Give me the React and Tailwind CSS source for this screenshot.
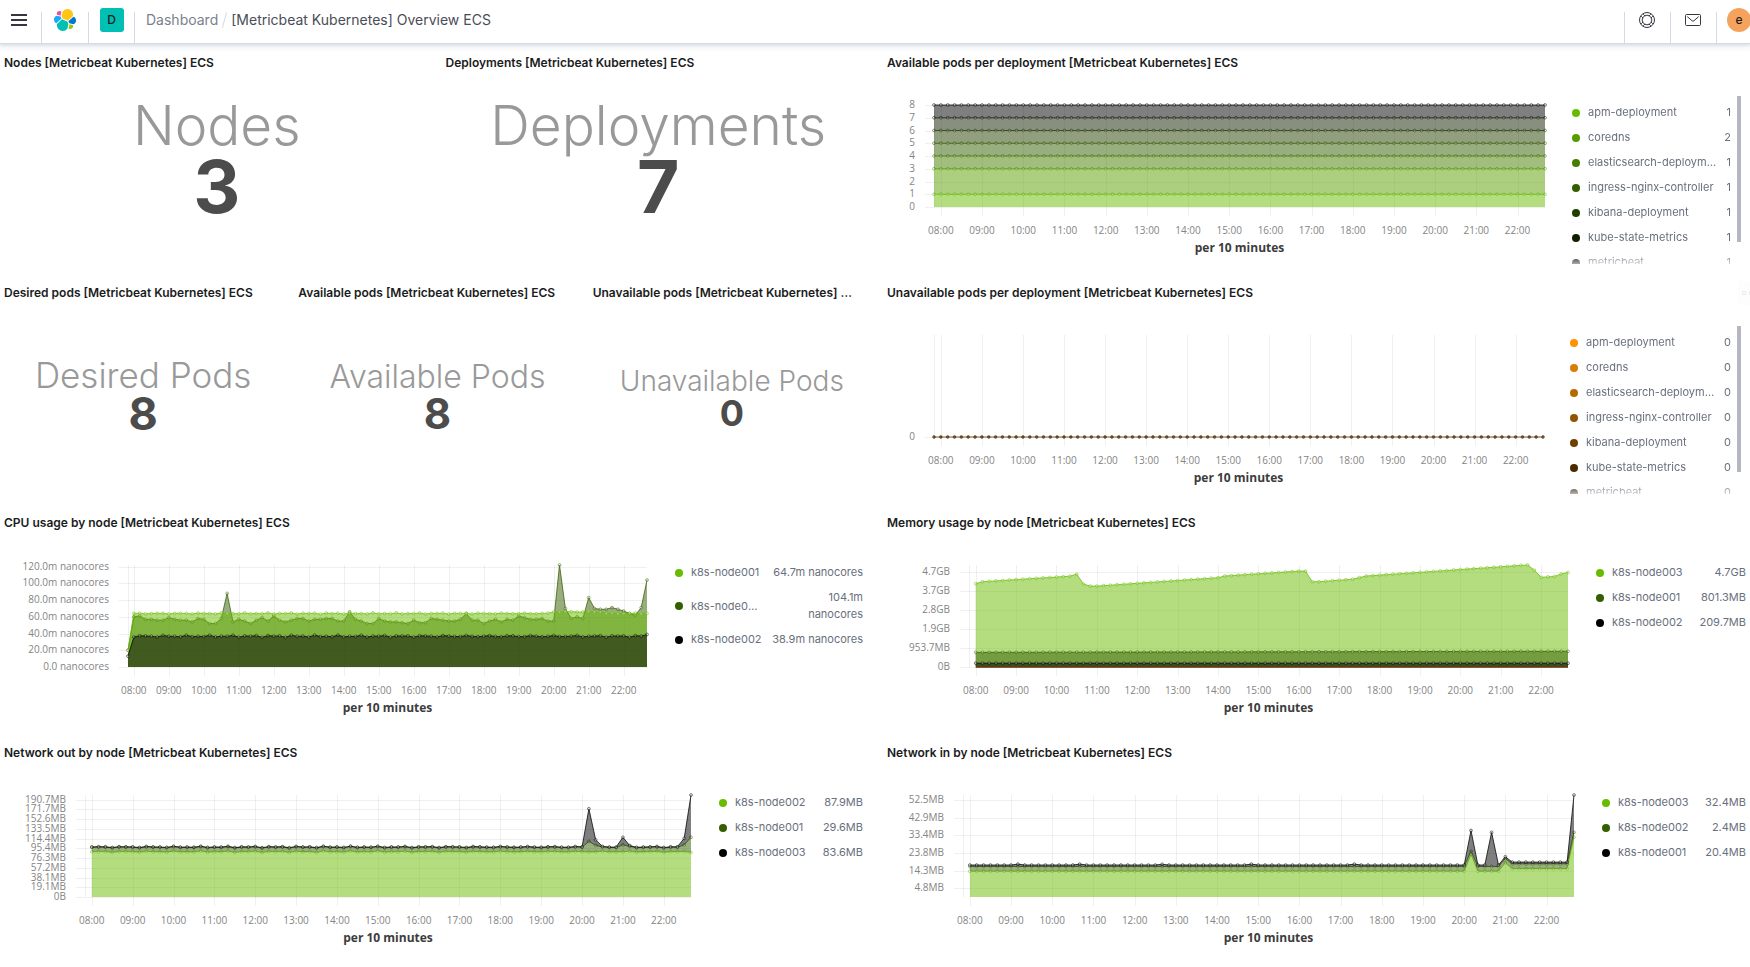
import { useLayoutEffect, useRef, useState } from "react";

const POINTS = 90;
const PLOT_TOP = 30;
const PLOT_BOTTOM = 132;
const HOURS = Array.from({ length: 15 }, (_, i) => `${String(i + 8).padStart(2, "0")}:00`);

const indices = Array.from({ length: POINTS }, (_, i) => i);
const flat = (value) => indices.map(() => value);

// Repeatable small variation around a base value.
const wobble = (base, amount, seed) =>
  indices.map((i) => base + amount * Math.sin(i * 2.4 + seed) * Math.cos(i * 0.7 + seed * 2));

const withPoints = (series, points) => series.map((v, i) => (i in points ? points[i] : v));

// Linear interpolation between [index, value] stops.
const through = (stops) =>
  indices.map((i) => {
    if (i < stops[0][0]) return null;
    const next = stops.findIndex(([x]) => x >= i);
    const [x1, y1] = stops[next];
    if (x1 === i) return y1;
    const [x0, y0] = stops[next - 1];
    return y0 + ((y1 - y0) * (i - x0)) / (x1 - x0);
  });

const GREENS = ["#68bc00", "#579d00", "#457d00", "#345e00", "#233f00", "#111f00", "#000000"];
const ORANGES = ["#fe9200", "#d97d00", "#b66900", "#925400", "#6f4000", "#4b2b00", "#281700"];
const DEPLOYMENTS = [
  "apm-deployment",
  "coredns",
  "elasticsearch-deployment",
  "ingress-nginx-controller",
  "kibana-deployment",
  "kube-state-metrics",
  "metricbeat",
];

const podLevels = [0, 1, 3, 4, 5, 6, 7, 8];
const availableSeries = DEPLOYMENTS.map((_, i) => ({
  color: GREENS[i],
  values: flat(podLevels[i + 1]),
  base: flat(podLevels[i]),
}));

const cpuNode3 = [
  20, 60, 61, 57, 57, 56, 56, 59, 57, 56, 56, 54, 58, 57, 52, 52, 58, 88, 54, 57, 55, 52, 56, 59, 55, 61, 56, 54, 56,
  58, 58, 55, 57, 57, 58, 58, 55, 55, 66, 57, 55, 52, 52, 58, 55, 54, 54, 53, 52, 56, 53, 53, 58, 57, 56, 55, 55, 57,
  64, 56, 56, 52, 55, 57, 54, 57, 56, 61, 59, 57, 57, 58, 55, 55, 122, 70, 58, 60, 58, 83, 70, 69, 69, 71, 69, 67, 64,
  62, 71, 104,
];
const cpuNode1 = wobble(64, 0.8, 1).map((v, i) => (i === 0 ? 20 : i > 72 && i < 82 ? v + 2 : v));
const cpuNode2 = wobble(36.8, 1.4, 3).map((v, i) => (i === 0 ? 13 : i === 89 ? 38.9 : v));

const skipFirst = (series) => series.map((v, i) => (i === 0 ? null : v));

const memory3 = through([
  [1, 4.39], [2, 4.49], [15, 4.78], [16, 4.89], [17, 4.37], [18, 4.26], [19, 4.26], [37, 4.7], [38, 4.79],
  [49, 5.05], [50, 5.05], [51, 4.49], [52, 4.49], [57, 4.62], [59, 4.79], [82, 5.35], [83, 5.37], [84, 5.1],
  [85, 4.72], [87, 4.77], [88, 4.9], [89, 4.98],
]);
const memory1 = through([[1, 0.77], [89, 0.83]]);
const memory2 = through([[1, 0.2], [89, 0.2]]);

const outLow = skipFirst(wobble(88.6, 1.5, 2));
const outMid = withPoints(skipFirst(wobble(97.3, 1.5, 2)), { 74: 109, 75: 101, 79: 102, 80: 99, 88: 102, 89: 117 });
const outTop = withPoints(skipFirst(wobble(98.2, 1.5, 2)), { 74: 173, 75: 112, 79: 117, 80: 101, 88: 115, 89: 200 });

const inStep = (a, b) => indices.map((i) => (i === 0 ? null : i > 79 ? b : a));
const inLow = withPoints(inStep(13.9, 15.3), { 74: 23, 79: 18.5, 89: 32.4 });
const inMid = withPoints(inStep(16.5, 17.9), { 74: 24.8, 79: 20.8, 89: 35 });
const inTop = withPoints(inStep(17.3, 18.9), { 8: 17.8, 17: 17.8, 29: 17.7, 42: 17.8, 57: 17.8, 74: 36, 77: 35, 79: 21.8, 89: 55.2 });

function useWidth() {
  const ref = useRef(null);
  const [width, setWidth] = useState(0);
  useLayoutEffect(() => {
    const measure = () => setWidth(ref.current.clientWidth);
    measure();
    const observer = new ResizeObserver(measure);
    observer.observe(ref.current);
    return () => observer.disconnect();
  }, []);
  return [ref, width];
}

function Chart({ label, left, max, ticks, series, baseline }) {
  const [ref, width] = useWidth();
  const right = width - 16;
  const x = (i) => left + (i * (right - left)) / (POINTS - 1);
  const y = (v) => PLOT_BOTTOM - (v / max) * (PLOT_BOTTOM - PLOT_TOP);
  return (
    <div ref={ref} className="min-w-0 flex-1">
      {width > 0 && (
        <svg width={width} height={190} role="img" aria-label={label} className="block font-['Open_Sans',sans-serif]">
          <g stroke="#000" strokeOpacity="0.06">
            {ticks.map(([v, text]) => (
              <line key={text} x1={left - 9} x2={right} y1={Math.round(y(v)) + 0.5} y2={Math.round(y(v)) + 0.5} />
            ))}
            <line x1={Math.round(left) + 0.5} x2={Math.round(left) + 0.5} y1={PLOT_TOP} y2={PLOT_BOTTOM} />
            {HOURS.map((h, i) => (
              <line key={h} x1={Math.round(x(1 + i * 6)) + 0.5} x2={Math.round(x(1 + i * 6)) + 0.5} y1={PLOT_TOP} y2={141} />
            ))}
          </g>
          {series.map(({ color, values, base, line }) => {
            const pts = indices.filter((i) => values[i] !== null);
            const top = pts.map((i) => `${x(i).toFixed(1)},${y(values[i]).toFixed(1)}`);
            const bottom = [...pts].reverse().map((i) => `${x(i).toFixed(1)},${y(base ? base[i] : 0).toFixed(1)}`);
            return (
              <g key={color}>
                {!line && <polygon points={[...top, ...bottom].join(" ")} fill={color} fillOpacity="0.5" />}
                <polyline points={top.join(" ")} fill="none" stroke={color} strokeOpacity="0.75" />
                {pts.map((i) => (
                  <circle
                    key={i}
                    cx={x(i)}
                    cy={y(values[i])}
                    r="1.4"
                    fill={line ? color : "#fff"}
                    fillOpacity={line ? 0.7 : 0.3}
                    stroke={color}
                    strokeOpacity="0.5"
                  />
                ))}
              </g>
            );
          })}
          {baseline && <line x1={x(1)} x2={right} y1={PLOT_BOTTOM + 0.5} y2={PLOT_BOTTOM + 0.5} stroke={baseline} />}
          <g fill="#848484" fontSize="10">
            {ticks.map(([v, text]) => (
              <text key={text} x={left - 19} y={y(v) + 3} textAnchor="end">{text}</text>
            ))}
            {HOURS.map((h, i) => (
              <text key={h} x={x(1 + i * 6)} y={159} textAnchor="middle">{h}</text>
            ))}
          </g>
          <text x={(left + right) / 2} y={177} textAnchor="middle" fontSize="12" fontWeight="700" fill="#3c3c3c">
            per 10 minutes
          </text>
        </svg>
      )}
    </div>
  );
}

function Legend({ items, className }) {
  return (
    <ul className={`shrink-0 text-[11px] leading-[17px] text-[#69707d] ${className}`}>
      {items.map(({ name, value, color, narrow }) => (
        <li key={name} className="flex items-center py-1">
          <span className="size-2 shrink-0 rounded-full" style={{ backgroundColor: color }} />
          <span className={`ml-2 truncate ${narrow ? "w-[70px] shrink-0" : "max-w-[130px] min-w-0"}`}>{name}</span>
          <span className={`ml-auto text-right ${narrow ? "w-16" : "shrink-0"}`}>{value}</span>
        </li>
      ))}
    </ul>
  );
}

function ScrollLegend({ items, className }) {
  return (
    <div className={`mt-[21px] flex h-[168px] shrink-0 overflow-hidden ${className}`}>
      <Legend
        items={items}
        className="h-full w-full min-w-0 flex-1 overflow-hidden pt-1 pl-[11px] [mask-image:linear-gradient(to_bottom,black_156px,transparent_174px)]"
      />
      <div className="mr-[9px] ml-[6px] h-[146px] w-1 shrink-0 bg-[#b4b7c3]" />
    </div>
  );
}

function Panel({ title, children, options, className = "" }) {
  return (
    <section className={`flex h-[222px] min-w-0 flex-col ${className}`}>
      <div className="flex h-6 items-center">
        <h2 className="min-w-0 flex-1 truncate px-1 text-xs leading-6 font-semibold text-[#1a1c21]">{title}</h2>
        {options && (
          <button aria-label="Panel options" className="flex h-6 w-3 shrink-0 items-center gap-[3px] overflow-hidden bg-[#fdfdfd] pl-1">
            <span className="size-1 shrink-0 border border-[#ececee]" />
            <span className="size-1 shrink-0 border border-[#ececee]" />
          </button>
        )}
      </div>
      <div className="flex min-h-0 flex-1">{children}</div>
    </section>
  );
}

function Metric({ label, value, labelClass, valueClass, className }) {
  return (
    <div className={`flex flex-1 flex-col items-center justify-center whitespace-nowrap ${className}`}>
      <div className={`font-light text-[#999] ${labelClass}`}>{label}</div>
      <div className={`font-bold text-[#4c4c4c] ${valueClass}`}>{value}</div>
    </div>
  );
}

function Header() {
  return (
    <header className="relative z-10 flex h-11 items-stretch border-b border-[#d3dae6] bg-white shadow-[0_2px_3px_rgba(152,162,179,0.3)]">
      <button aria-label="Toggle navigation" className="flex w-[41px] items-center pr-[14px] pb-1 pl-[11px]">
        <svg viewBox="0 0 16 12" className="h-3 w-4" fill="#343741">
          <path d="M0 0h16v2H0zM0 5h16v2H0zM0 10h16v2H0z" />
        </svg>
      </button>
      <Divider />
      <a href="#home" aria-label="Elastic home" className="flex w-[46px] items-center justify-center pb-1">
        <svg viewBox="0 0 32 32" className="size-6">
          <path fill="#FEC514" d="M12.58 13.787l7.002 3.211 7.066-6.213a7.849 7.849 0 00.152-1.557c0-4.287-3.464-7.775-7.722-7.775a7.702 7.702 0 00-6.378 3.388l-1.176 6.124 1.056 2.822z" />
          <path fill="#00BFB3" d="M5.33 21.243a7.822 7.822 0 00-.155 1.577c0 4.3 3.487 7.798 7.766 7.798a7.735 7.735 0 006.407-3.406l1.165-6.102-1.554-2.987-7.03-3.218-6.6 6.338z" />
          <path fill="#F04E98" d="M5.288 9.067l4.8 1.137L11.14 4.73a3.785 3.785 0 00-2.28-.765 3.815 3.815 0 00-3.798 3.827c0 .435.074.866.226 1.275z" />
          <path fill="#1BA9F5" d="M4.872 10.214c-2.145.713-3.638 2.795-3.638 5.062 0 2.207 1.36 4.18 3.401 4.96l6.73-6.115-1.234-2.655-5.259-1.252z" />
          <path fill="#93C90E" d="M20.873 27.212a3.78 3.78 0 002.27.758c2.095 0 3.8-1.717 3.8-3.827 0-.465-.079-.895-.226-1.275l-4.794-1.126-1.05 5.47z" />
          <path fill="#0077CC" d="M21.853 20.485l5.28 1.236c2.145-.71 3.638-2.793 3.638-5.061 0-2.203-1.364-4.173-3.406-4.953l-6.906 6.08 1.394 2.698z" />
        </svg>
      </a>
      <Divider />
      <div className="flex w-[45px] items-center justify-center pb-1">
        <button aria-label="Default space" className="size-6 rounded-[3px] bg-[#00bfb3] text-xs font-medium text-[#1a1c21]">
          D
        </button>
      </div>
      <Divider />
      <nav aria-label="Breadcrumbs" className="flex items-center pb-1 pl-[11px] text-sm">
        <a href="#dashboard" className="text-[#7b818c]">Dashboard</a>
        <span className="mx-[6px] h-4 w-px rotate-15 bg-[#d3dae6]" />
        <span className="text-[#4a4d56]">[Metricbeat Kubernetes] Overview ECS</span>
      </nav>
      <div className="ml-auto flex">
        <Divider />
        <button aria-label="Help" className="flex w-[45px] items-center justify-center pr-0.5 pb-1">
          <svg viewBox="0 0 16 16" className="size-4" fill="none" stroke="#343741">
            <circle cx="8" cy="8" r="7.5" />
            <circle cx="8" cy="8" r="4.8" />
            <path d="M2.2 4.2l2 2M4.2 2.2l2 2M11.8 2.2l-2 2M13.8 4.2l-2 2M2.2 11.8l2-2M4.2 13.8l2-2M11.8 13.8l-2-2M13.8 11.8l-2-2" />
          </svg>
        </button>
        <Divider />
        <button aria-label="News" className="flex w-[45px] items-center justify-center pr-0.5 pb-1">
          <svg viewBox="0 0 16 12" className="h-3 w-4" fill="none" stroke="#343741">
            <rect x="0.5" y="0.5" width="15" height="11" rx="1" />
            <path d="M2.3 2.6l4.8 4.2a1.4 1.4 0 001.8 0l4.8-4.2" />
          </svg>
        </button>
        <Divider />
        <div className="flex w-[33px] items-center pb-1 pl-[10px]">
          <button aria-label="Account" className="size-6 shrink-0 rounded-full bg-[#f5a35c] text-xs font-medium text-[#1a1c21]">
            e
          </button>
        </div>
      </div>
    </header>
  );
}

function Divider() {
  return <span className="mt-3 w-px shrink-0 bg-[#d3dae6]" />;
}

const podLegend = (colors, values) =>
  DEPLOYMENTS.map((name, i) => ({ name, color: colors[i], value: values[i] }));

export default function App() {
  return (
    <div className="min-h-screen overflow-x-clip bg-white font-['Inter',sans-serif]">
      <Header />
      <main className="grid grid-cols-[875fr_867fr] gap-2 bg-[linear-gradient(#fafbfd_7px,#fff_7px)] pt-[7px]">
        <div className="grid grid-cols-2 gap-2">
          <Panel title="Nodes [Metricbeat Kubernetes] ECS">
            <Metric label="Nodes" value="3" className="pb-[29px]" labelClass="text-[55px] leading-[55px]" valueClass="text-[73px] leading-[68px]" />
          </Panel>
          <Panel title="Deployments [Metricbeat Kubernetes] ECS">
            <Metric label="Deployments" value="7" className="pb-[29px]" labelClass="text-[55px] leading-[55px]" valueClass="text-[73px] leading-[68px]" />
          </Panel>
        </div>
        <Panel title="Available pods per deployment [Metricbeat Kubernetes] ECS">
          <Chart
            label="Available pods per deployment"
            left={51}
            max={8}
            ticks={[0, 1, 2, 3, 4, 5, 6, 7, 8].map((n) => [n, String(n)])}
            series={availableSeries}
          />
          <ScrollLegend className="w-[189px]" items={podLegend(GREENS, [1, 2, 1, 1, 1, 1, 1])} />
        </Panel>

        <div className="grid grid-cols-3 gap-2">
          <Panel title="Desired pods [Metricbeat Kubernetes] ECS">
            <Metric label="Desired Pods" value="8" className="pb-[14px]" labelClass="text-[35px] leading-[34px]" valueClass="text-[45px] leading-[44px]" />
          </Panel>
          <Panel title="Available pods [Metricbeat Kubernetes] ECS">
            <Metric label="Available Pods" value="8" className="pb-[12px]" labelClass="text-[32px] leading-[32px]" valueClass="text-[42px] leading-[42px]" />
          </Panel>
          <Panel title="Unavailable pods [Metricbeat Kubernetes] ECS" className="pr-3">
            <Metric label="Unavailable Pods" value="0" className="-mr-3 pb-[10px]" labelClass="text-[28px] leading-[28px]" valueClass="text-[36px] leading-[36px]" />
          </Panel>
        </div>
        <Panel options title="Unavailable pods per deployment [Metricbeat Kubernetes] ECS">
          <Chart
            label="Unavailable pods per deployment"
            left={51}
            max={1}
            ticks={[[0, "0"]]}
            series={[{ color: "#4b2b00", values: flat(0), line: true }]}
          />
          <ScrollLegend className="w-[191px]" items={podLegend(ORANGES, [0, 0, 0, 0, 0, 0, 0])} />
        </Panel>

        <Panel title="CPU usage by node [Metricbeat Kubernetes] ECS">
          <Chart
            label="CPU usage by node"
            left={128}
            max={122}
            ticks={[0, 20, 40, 60, 80, 100, 120].map((n) => [n, n ? `${n}.0m nanocores` : "0.0 nanocores"])}
            series={[
              { color: "#345e00", values: cpuNode3 },
              { color: "#68bc00", values: cpuNode1 },
              { color: "#000000", values: cpuNode2 },
            ]}
          />
          <Legend
            className="w-[212px] pt-[25px] pr-3 pl-3"
            items={[
              { name: "k8s-node001", value: "64.7m nanocores", color: "#68bc00" },
              { name: "k8s-node003", value: "104.1m nanocores", color: "#345e00", narrow: true },
              { name: "k8s-node002", value: "38.9m nanocores", color: "#000000" },
            ]}
          />
        </Panel>
        <Panel title="Memory usage by node [Metricbeat Kubernetes] ECS">
          <Chart
            label="Memory usage by node"
            left={86}
            max={5.37}
            ticks={["0B", "953.7MB", "1.9GB", "2.8GB", "3.7GB", "4.7GB"].map((t, i) => [i, t])}
            series={[
              { color: "#68bc00", values: memory3 },
              { color: "#345e00", values: memory1 },
              { color: "#000000", values: memory2 },
            ]}
            baseline="#a5482f"
          />
          <Legend
            className="w-[166px] pt-[25px] pr-1 pl-3"
            items={[
              { name: "k8s-node003", value: "4.7GB", color: "#68bc00" },
              { name: "k8s-node001", value: "801.3MB", color: "#345e00" },
              { name: "k8s-node002", value: "209.7MB", color: "#000000" },
            ]}
          />
        </Panel>

        <Panel title="Network out by node [Metricbeat Kubernetes] ECS">
          <Chart
            label="Network out by node"
            left={85}
            max={200}
            ticks={[
              "0B", "19.1MB", "38.1MB", "57.2MB", "76.3MB", "95.4MB", "114.4MB", "133.5MB", "152.6MB", "171.7MB", "190.7MB",
            ].map((t, i) => [i * 19.07, t])}
            series={[
              { color: "#68bc00", values: outLow },
              { color: "#345e00", values: outMid, base: outLow },
              { color: "#000000", values: outTop, base: outMid },
            ]}
          />
          <Legend
            className="w-[168px] pt-[25px] pr-3 pl-3"
            items={[
              { name: "k8s-node002", value: "87.9MB", color: "#68bc00" },
              { name: "k8s-node001", value: "29.6MB", color: "#345e00" },
              { name: "k8s-node003", value: "83.6MB", color: "#000000" },
            ]}
          />
        </Panel>
        <Panel title="Network in by node [Metricbeat Kubernetes] ECS">
          <Chart
            label="Network in by node"
            left={80}
            max={55.2}
            ticks={["4.8MB", "14.3MB", "23.8MB", "33.4MB", "42.9MB", "52.5MB"].map((t, i) => [4.8 + i * 9.54, t])}
            series={[
              { color: "#68bc00", values: inLow },
              { color: "#345e00", values: inMid, base: inLow },
              { color: "#000000", values: inTop, base: inMid },
            ]}
          />
          <Legend
            className="w-[160px] pt-[25px] pr-1 pl-3"
            items={[
              { name: "k8s-node003", value: "32.4MB", color: "#68bc00" },
              { name: "k8s-node002", value: "2.4MB", color: "#345e00" },
              { name: "k8s-node001", value: "20.4MB", color: "#000000" },
            ]}
          />
        </Panel>
      </main>
    </div>
  );
}
